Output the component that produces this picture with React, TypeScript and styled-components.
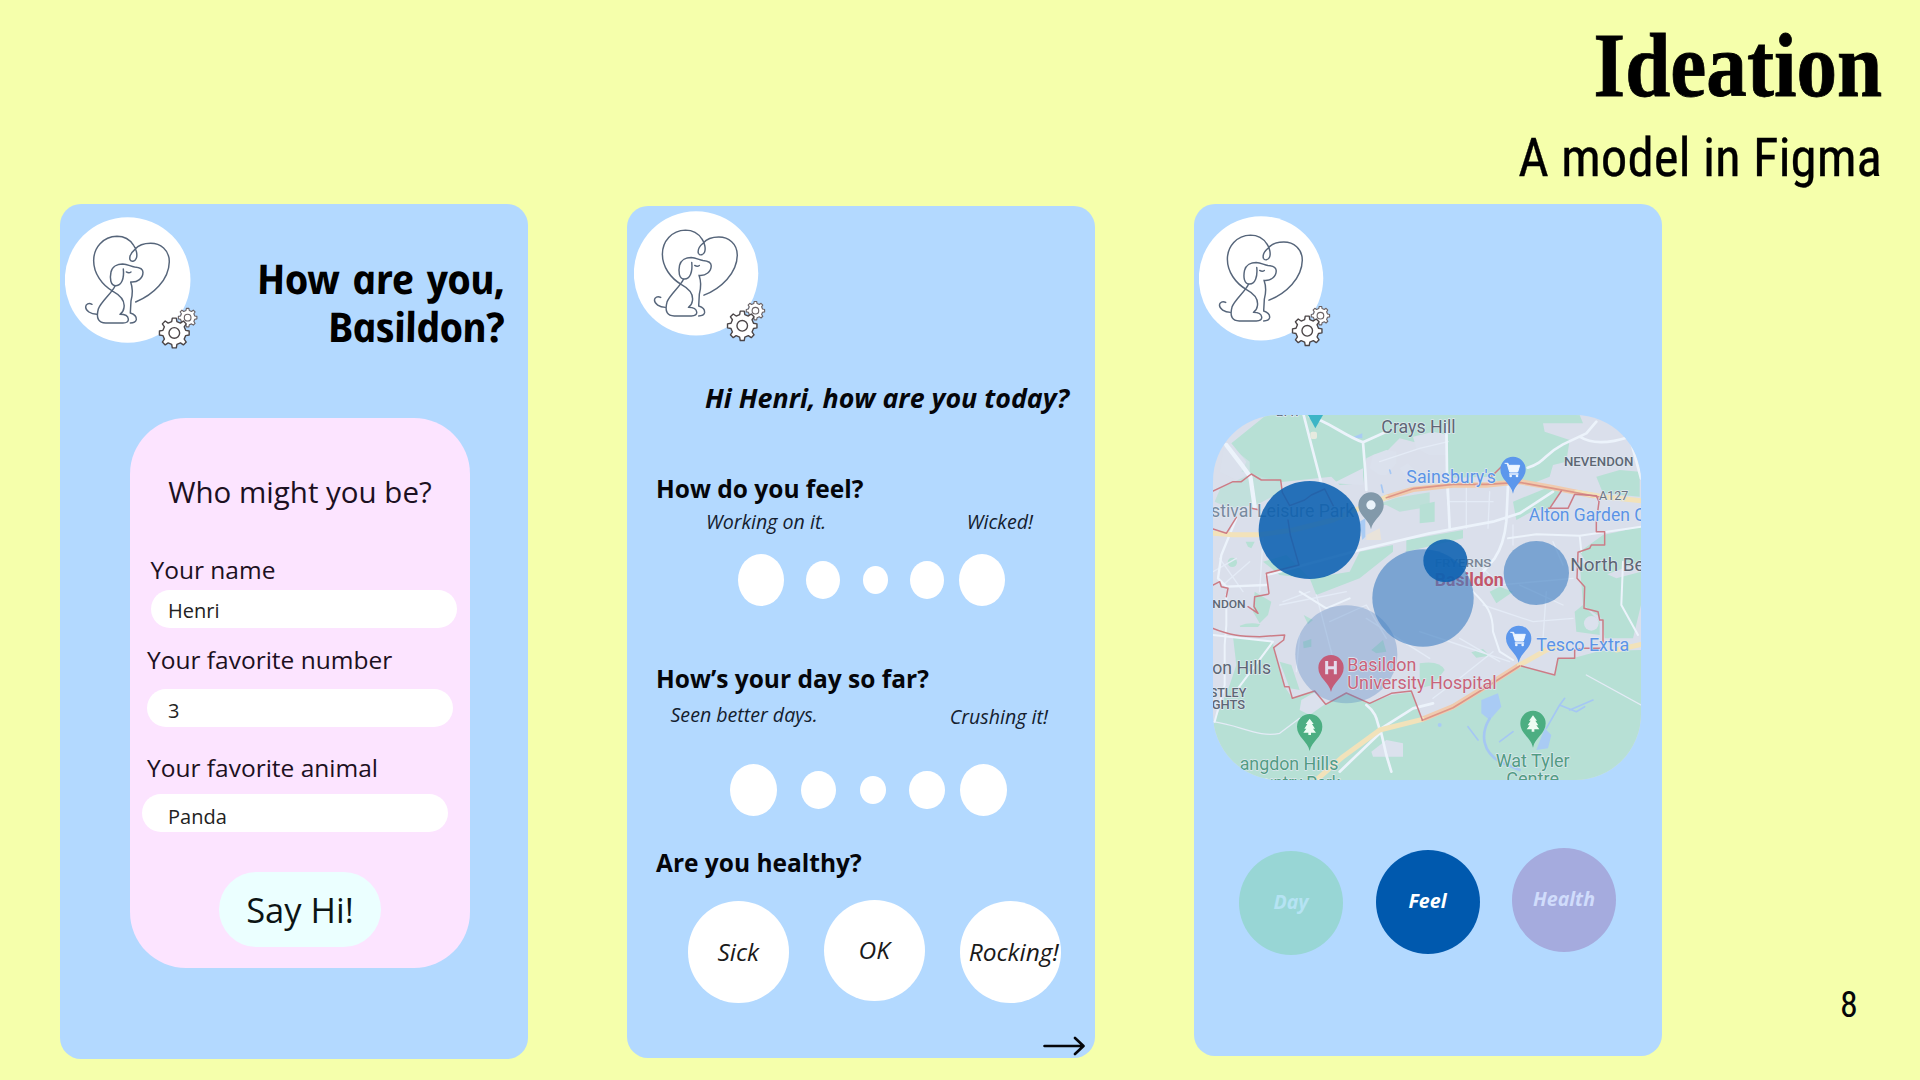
import React from "react";
import styled, { createGlobalStyle } from "styled-components";

const Global = createGlobalStyle`
  *, *::before, *::after { box-sizing: border-box; }
  body { margin: 0; background: #f5ffab; }
  h1, h2, p { margin: 0; }
`;

const sans = `"Open Sans", "Noto Sans", sans-serif`;
const condensed = `"Roboto Condensed", Roboto, sans-serif`;

const Slide = styled.main`
  width: 1920px;
  height: 1080px;
  overflow: hidden;
  display: flex;
  flex-direction: column;
  background: #f5ffab;
  color: #05060a;
  font-family: ${sans};
`;

const SlideHeader = styled.header`
  height: 204px;
  flex: none;
  padding: 12px 38px 0 0;
  display: flex;
  flex-direction: column;
  align-items: flex-end;
  color: #000;
`;

const Title = styled.h1`
  font: 700 92px/106px "Liberation Serif", serif;
  white-space: nowrap;
  transform: scaleX(0.882);
  transform-origin: right center;
  -webkit-text-stroke: 0.8px #000;
`;

const Subtitle = styled.p`
  margin-top: 9px;
  font: 400 53px/62px ${condensed};
  font-stretch: 75%;
  white-space: nowrap;
  -webkit-text-stroke: 0.3px #000;
`;

const Stage = styled.div`
  flex: 1;
  display: flex;
  align-items: flex-start;
  gap: 99px;
  padding-left: 60px;
`;

const Phone = styled.section<{ $drop?: number; $height: number }>`
  flex: none;
  width: 468px;
  height: ${(p) => p.$height}px;
  margin-top: ${(p) => p.$drop ?? 0}px;
  border-radius: 21px;
  background: #b3d9ff;
  display: flex;
  flex-direction: column;
`;

const PageNumber = styled.p`
  margin: 779px 0 0 79px;
  font: 400 36px/44px ${condensed};
  font-stretch: 75%;
`;

const LogoArt = styled.svg<{ $size: number; $top: number; $left: number }>`
  flex: none;
  display: block;
  width: ${(p) => p.$size}px;
  height: ${(p) => p.$size}px;
  margin: ${(p) => p.$top}px 0 0 ${(p) => p.$left}px;
`;

/* ---------- welcome screen ---------- */

const WelcomeHead = styled.div`
  height: 214px;
  display: flex;
  justify-content: space-between;
`;

const Greeting = styled.h2`
  margin: 50px 25px 0 0;
  display: flex;
  flex-direction: column;
  align-items: flex-end;
  font: italic 700 41px/48px ${sans};
  letter-spacing: -1.1px;
  word-spacing: 4px;
  white-space: nowrap;
  color: #000;
`;

const GreetingLine = styled.span`
  transform: skewX(11deg);
`;

const FormCard = styled.div`
  width: 340px;
  height: 550px;
  margin-left: 70px;
  padding-top: 54px;
  border-radius: 56px;
  background: #fce4ff;
  display: flex;
  flex-direction: column;
  color: #1c1022;
`;

const FormTitle = styled.h2`
  font-size: 29.500px;
  font-weight: 400;
  line-height: 40px;
  text-align: center;
  margin-bottom: 42.5px;
`;

const Label = styled.label<{ $left: number; $top?: number }>`
  margin: ${(p) => p.$top ?? 0}px 0 0 ${(p) => p.$left}px;
  font-size: 24.5px;
  line-height: 30px;
  white-space: nowrap;
`;

const Field = styled.div<{ $left: number; $top: number; $inset: number; $rise: number }>`
  width: 306px;
  height: 38px;
  flex: none;
  margin: ${(p) => p.$top}px 0 0 ${(p) => p.$left}px;
  padding: ${(p) => p.$rise}px 0 0 ${(p) => p.$inset}px;
  border-radius: 19px;
  background: #fff;
  font-size: 20px;
  line-height: 30px;
  color: #222;
`;

const HiButton = styled.button`
  align-self: center;
  margin-top: 40px;
  width: 162px;
  height: 75px;
  flex: none;
  border: 0;
  border-radius: 38px;
  background: #ebffff;
  font: 400 34.5px/48px ${sans};
  color: #0c1414;
  padding: 1px 0 0;
`;

/* ---------- survey screen ---------- */

const Hello = styled.h2`
  margin: 34.5px 26px 56px 0;
  font: italic 700 26.8px/40px ${sans};
  text-align: right;
  white-space: nowrap;
`;

const Question = styled.h2<{ $top?: number }>`
  margin: ${(p) => p.$top ?? 0}px 0 0 29px;
  font: 700 24.5px/30px ${sans};
  white-space: nowrap;
`;

const Hints = styled.div<{ $top: number; $left: number; $right: number }>`
  margin-top: ${(p) => p.$top}px;
  padding: 0 ${(p) => p.$right}px 0 ${(p) => p.$left}px;
  height: 30px;
  display: flex;
  justify-content: space-between;
  font: italic 400 19.6px/30px ${sans};
  color: #14202e;
`;

const HintEnd = styled.span<{ $drop?: number }>`
  padding-top: ${(p) => p.$drop ?? 0}px;
`;

const Dots = styled.div<{ $top: number; $left: number; $gap: number }>`
  height: 52px;
  margin: ${(p) => p.$top}px 0 0 ${(p) => p.$left}px;
  display: flex;
  align-items: center;
  gap: ${(p) => p.$gap}px;
`;

const Dot = styled.span<{ $w: number; $h: number }>`
  width: ${(p) => p.$w}px;
  height: ${(p) => p.$h}px;
  border-radius: 50%;
  background: #fff;
  &:last-child { margin-left: -8.500px; }
`;

const Choices = styled.div`
  margin: 21.5px 0 0 60.5px;
  display: flex;
  gap: 34.5px;
`;

const Choice = styled.div<{ $drop?: number; $nudge?: number }>`
  width: 101.5px;
  height: 101.5px;
  margin-top: ${(p) => p.$drop ?? 0}px;
  padding-left: ${(p) => p.$nudge ?? 0}px;
  border-radius: 50%;
  background: #fff;
  display: flex;
  align-items: center;
  justify-content: center;
  font: italic 400 24.5px/30px ${sans};
  white-space: nowrap;
  color: #1a1a1a;
`;

const NextArrow = styled.svg`
  display: block;
  align-self: flex-end;
  margin: 33px 10px 0 0;
  width: 42px;
  height: 20px;
`;

/* ---------- map screen ---------- */

const MapFrame = styled.svg`
  display: block;
  flex: none;
  width: 428px;
  height: 365px;
  margin: 67px 0 0 19px;
  border-radius: 66px;
  background: #dadfeb;
  font-family: Roboto, sans-serif;
`;

const Filters = styled.div`
  margin: 68px 0 0 45px;
  display: flex;
  gap: 32.5px;
`;

const Filter = styled.div<{ $bg: string; $ink: string; $drop: number }>`
  width: 104px;
  height: 104px;
  margin-top: ${(p) => p.$drop}px;
  border-radius: 50%;
  background: ${(p) => p.$bg};
  color: ${(p) => p.$ink};
  display: flex;
  align-items: center;
  justify-content: center;
  font: italic 700 19.6px/28px ${sans};
  padding-bottom: 2px;
`;

function gearPath(cx: number, cy: number, outer: number, root: number, teeth = 8) {
  const step = (Math.PI * 2) / teeth;
  const pts: string[] = [];
  const at = (r: number, a: number) => `${(cx + r * Math.cos(a)).toFixed(1)} ${(cy + r * Math.sin(a)).toFixed(1)}`;
  for (let i = 0; i < teeth; i++) {
    const a = i * step - Math.PI / 2;
    pts.push(at(root, a - step * 0.29), at(outer, a - step * 0.17), at(outer, a + step * 0.17), at(root, a + step * 0.29));
  }
  return `M${pts.join("L")}Z`;
}

function Logo({ size, top, left }: { size: number; top: number; left: number }) {
  return (
    <LogoArt $size={size} $top={top} $left={left} viewBox="46 66 400 400" fill="none" strokeLinecap="round" strokeLinejoin="round">
      <circle cx="234" cy="255" r="188.500" fill="#fff" />
      <g stroke="#56657a" strokeWidth="4.400">
        <path d="M258 321C310 300 358 255 359 200C359 164 332 145 303 145C285 145 266 151 256 163C244 173 238 182 241 194C245 202 256 200 260 190C264 180 260 162 252 151C241 134 222 124 202 124C160 125 132 158 132 197C132 235 157 270 190 289C214 302 226 320 223 338C222 348 218 353 211 358C225 358 235 362 236 372C237 380 231 384 220 384H168C148 384 138 372 146 342C154 320 187 294 196 273" />
        <path d="M141 358C123 358 108 347 108 336C108 327 118 323 127 328" />
        <path d="M221 222C224 250 216 272 199 272C182 272 180 250 184 231C188 214 204 207 219 207C235 208 242 214 255 216C268 217 280 221 280 232C280 250 264 263 243 261C252 285 248 303 244 318L242 354C255 358 261 366 260 374C258 382 251 384 242 384" />
        <path d="M230 231Q238 236 244 231" />
      </g>
      <g stroke="#6a6265" strokeWidth="3.400" fill="#fff">
        <path d={gearPath(414, 368, 28, 22)} />
        <circle cx="414" cy="368" r="10" />
      </g>
      <g stroke="#4b4547" strokeWidth="4.200" fill="#fff">
        <path d={gearPath(374, 414, 45, 35)} />
        <circle cx="374" cy="414" r="16" />
      </g>
    </LogoArt>
  );
}

function Pin({ x, y, color, children }: { x: number; y: number; color: string; children?: React.ReactNode }) {
  return (
    <g transform={`translate(${x} ${y})`}>
      <path d="M0 73C-6 42 -38 32 -38 0A38 38 0 0 1 38 0C38 32 6 42 0 73Z" fill={color} />
      {children}
    </g>
  );
}

const Cart = () => (
  <g>
    <path d="M-24 -18H-15L-13 -12H20L14 8H-10L-17 -15" fill="#eef6ff" stroke="#eef6ff" strokeWidth="3" />
    <path d="M-10 14H15" stroke="#eef6ff" strokeWidth="4" />
    <circle cx="-7" cy="20" r="4" fill="#eef6ff" />
    <circle cx="12" cy="20" r="4" fill="#eef6ff" />
  </g>
);

const Tree = () => (
  <path d="M0 -24L12 -8H7L16 6H10L19 18H4V25H-4V18H-19L-10 6H-16L-7 -8H-12Z" fill="#eefcf4" />
);

interface Place {
  text: string;
  x: number;
  y: number;
  w: number;
  size: number;
  color: string;
  weight?: number;
}

const slate = "#5d6674";
const blue = "#5b93e6";
const red = "#c9637a";
const green = "#529c83";

const places: Place[] = [
  { text: "BAY", x: 228, y: 34, w: 76, size: 32, color: slate },
  { text: "Crays Hill", x: 545, y: 83, w: 223, size: 54, color: slate },
  { text: "Sainsbury's", x: 620, y: 234, w: 269, size: 54, color: blue },
  { text: "NEVENDON", x: 1093, y: 184, w: 208, size: 36, color: slate, weight: 500 },
  { text: "A127", x: 1198, y: 285, w: 88, size: 40, color: "#6d7580" },
  { text: "Alton Garden Centre", x: 987, y: 349, w: 470, size: 54, color: blue },
  { text: "stival Leisure Park", x: 34, y: 336, w: 430, size: 54, color: "#78899e" },
  { text: "FRYERNS", x: 705, y: 487, w: 170, size: 35, color: "#7b8595", weight: 500 },
  { text: "Basildon", x: 705, y: 544, w: 207, size: 53, color: "#c2566b", weight: 700 },
  { text: "North Benfleet", x: 1112, y: 497, w: 365, size: 55, color: slate },
  { text: "NDON", x: 38, y: 608, w: 100, size: 35, color: slate, weight: 500 },
  { text: "Tesco Extra", x: 1010, y: 738, w: 279, size: 54, color: blue },
  { text: "Basildon", x: 443, y: 798, w: 207, size: 54, color: red },
  { text: "University Hospital", x: 443, y: 851, w: 448, size: 54, color: red },
  { text: "on Hills", x: 38, y: 807, w: 176, size: 54, color: slate },
  { text: "STLEY", x: 30, y: 877, w: 110, size: 36, color: slate, weight: 500 },
  { text: "GHTS", x: 36, y: 912, w: 100, size: 36, color: slate, weight: 500 },
  { text: "angdon Hills", x: 120, y: 1096, w: 296, size: 54, color: green },
  { text: "Country Park", x: 132, y: 1151, w: 290, size: 54, color: green },
  { text: "Wat Tyler", x: 888, y: 1086, w: 222, size: 54, color: green },
  { text: "Centre", x: 920, y: 1141, w: 158, size: 54, color: green },
];

function TownMap() {
  return (
    <MapFrame viewBox="40 30 1284 1095" preserveAspectRatio="none" fill="none" strokeLinecap="round" strokeLinejoin="round">
      <g fill="#b7e0d5">
        <path d="M95 115L200 30H1140L1150 55L1030 55L1035 80L1110 105L1100 170L1060 180L1050 215L1000 235L900 232L870 215L760 218L742 200V105L690 120L640 110L600 100L560 140L520 150L500 160L490 235L420 240L395 215L240 232L155 206L125 200L140 170Z" />
        <path d="M62 250L155 206L243 225V262L170 300L90 310L45 290Z" opacity=".7" />
        <path d="M530 300L590 278L690 262V305L600 320L560 300Z" opacity=".8" />
        <path d="M940 290L1050 245L1085 255L1050 310L1000 318L950 345Z" />
        <path d="M1190 215L1260 195L1320 200V275L1210 265Z" />
        <path d="M480 440L580 420V440L480 520L350 570L330 520L450 500Z" />
        <path d="M620 405L790 375V400L620 440Z" />
        <path d="M660 300L705 290V350L660 355Z" />
        <path d="M190 470L260 450L330 520L240 510Z" />
        <circle cx="98" cy="472" r="14" />
        <path d="M138 410H165L155 430L145 425Z" />
        <path d="M1210 390L1324 365V470L1190 520L1140 440Z" />
        <path d="M1140 470L1250 520L1324 500V600L1300 700L1215 700L1205 640L1150 600Z" />
        <path d="M1125 620L1150 600L1200 650V690L1130 680Z" />
        <path d="M165 560L215 590L205 630L180 655L160 620Z" />
        <path d="M120 662Q150 650 182 658L175 666H122Z" />
        <path d="M240 770L275 780L300 855L270 850Z" />
        <path d="M870 560L900 545L940 560L890 595Z" />
        <path d="M815 742L850 732L870 752L830 758Z" />
        <path d="M660 775Q720 765 735 795L700 840L660 850Z" />
        <path d="M310 710L335 702V725L312 730ZM515 735L550 705L560 740L530 745ZM312 630L340 645L325 658Z" />
        <path d="M100 695L220 712L222 730L255 845L278 880L345 858L378 898L440 866L510 895L575 870L635 862L668 945L850 850L962 782L1065 812L1075 762L1130 757L1200 738L1324 735V1125H40V960L90 840L110 780Z" />
      </g>
      <g fill="#dbe1ed">
        <path d="M520 150L560 135L590 140V175L560 210H540L510 190Z" />
        <path d="M600 190L625 175L650 200L620 215Z" />
        <path d="M400 235L490 190V240Z" />
        <path d="M640 95L700 80L745 90V150L690 150L650 130Z" />
        <path d="M75 110L150 170L150 205L110 225L60 200Z" opacity=".6" />
        <path d="M515 1040L560 1005L610 1015V1055L520 1055Z" />
        <path d="M305 885L345 862L380 895L330 930L300 915Z" />
        <circle cx="1175" cy="655" r="22" />
      </g>
      <g fill="#a9cbf4">
        <path d="M845 885L895 865L905 905L870 945L845 925Z" />
        <path d="M1010 1035L1035 970L1055 990L1045 1030Z" />
        <path d="M455 98L488 85V100Z" />
        <path d="M480 350L497 340V395L488 405Z" />
        <circle cx="720" cy="960" r="6" />
      </g>
      <g stroke="#a5c7f3" strokeWidth="8">
        <path d="M870 940C840 990 850 1040 900 1070L960 1095" />
        <path d="M1040 970L1080 900L1130 920L1155 905M1080 900L1095 880M805 965L835 1005M900 1010L940 980M1110 915L1180 885" strokeWidth="5" />
        <path d="M545 240L550 262M570 195L573 205" strokeWidth="5" />
      </g>
      <g stroke="#e4ebf6" strokeWidth="4">
        <path d="M40 500L110 460M60 460L130 560M190 400L180 560M70 540L150 470M750 290H880M800 240V370M870 260L865 370M740 230L745 300M240 600L440 560M350 570L400 760M390 650L500 600L560 700M840 480L900 540L1120 520M960 540L1090 600M850 600L1000 650L1120 640M780 700L900 770M660 680L780 720L930 770M700 880L780 820L880 740M940 360V420M1040 560L1030 700M500 640L690 760M250 590L330 560M300 690L290 800M1060 410L1090 480" />
        <path d="M40 950C120 960 180 1000 240 985L300 940M1160 810L1324 900M540 170L660 130L745 110" />
      </g>
      <g stroke="#ecf3fb" strokeWidth="8">
        <path d="M80 120L130 185L152 215L165 305" strokeWidth="13" />
        <path d="M312 30L335 120L365 235M330 35C380 45 430 90 490 112L560 80M490 112L497 200L500 255" />
        <path d="M984 188C1040 170 1030 150 1090 118L1160 85L1190 50M1140 95C1180 120 1230 115 1290 95M1290 95L1324 220" />
        <path d="M200 510L480 435L690 385L880 350L960 325L1060 260M740 60L742 200L750 370M925 240L920 350C915 400 905 430 885 460L850 500" />
        <path d="M925 400L1010 388L1140 392L1324 365M1140 392L1145 440" strokeWidth="6" />
        <path d="M110 340L65 450L55 520L80 545L200 540" strokeWidth="7" />
        <path d="M80 570V660L75 720V840L45 950M40 690L220 710L115 850M300 560L380 610L450 580M820 560C860 600 880 620 880 680L900 740L940 765" strokeWidth="6" />
        <path d="M500 900C540 930 530 960 545 985L560 1050L575 1100M545 970L640 910L700 895M545 980L420 1100" />
        <path d="M1270 470L1265 600L1315 690" strokeWidth="6" />
      </g>
      <g strokeWidth="16" stroke="#f0cbae">
        <path d="M560 277L640 253L760 240H860L960 230L1060 248L1180 272M668 943L760 905L850 850L960 780" />
      </g>
      <g strokeWidth="15" stroke="#f2e2ba">
        <path d="M40 385L100 389L180 389L280 375L400 345L480 310L560 277M1130 262L1210 275L1324 287M350 1125L430 1055L540 975L668 943M960 780L1040 735L1090 725M1250 735L1324 718" />
      </g>
      <path d="M560 278L640 251L760 238H860L960 232L1060 250L1200 276M668 946L760 908L850 853L960 783" stroke="#dd9588" strokeWidth="5" />
      <g stroke="#cc7c86" strokeWidth="4.500">
        <path d="M40 258L100 230L125 230L155 207L185 225H243L248 262L270 302L315 285L335 270L375 252L402 305M40 372L80 385L110 337M155 310L180 315M265 345L272 390L298 480L200 505L208 565L205 568L165 575L163 605L175 625L145 605M40 540L60 530L65 545L85 550L80 575" />
        <path d="M40 670C90 690 120 695 180 695L255 690L252 705L222 728L255 845H268L278 880L345 858L378 898L440 864L510 895L575 865L635 858L668 945" />
        <path d="M870 220L905 185H920M1050 310L1085 258M1045 310L1105 310L1125 268L1190 272L1198 290L1190 350V380H1215V420H1175L1170 430L1135 442L1132 520L1155 545L1153 610L1195 620L1200 645H1210V730L1150 730L1125 735V760H1075L1065 810L965 783" />
      </g>
      <path d="M325 30H370L347 70Z" fill="#3db5c6" />
      <path d="M500 390L540 370L545 405L500 405Z" fill="#e9e3da" />
      <rect x="332" y="80" width="20" height="22" rx="6" fill="#e6eadf" />
      <ellipse cx="440" cy="748" rx="153" ry="147" fill="#4e80c2" opacity=".32" />
      <g stroke="#e0e9f1" strokeWidth="4" paintOrder="stroke">
        {places.map((p, i) => (
          <text key={i} x={p.x} y={p.y} fontSize={p.size} fill={p.color} fontWeight={p.weight ?? 400} textLength={p.w} lengthAdjust="spacingAndGlyphs">
            {p.text}
          </text>
        ))}
      </g>
      <Pin x={514} y={300} color="#8299aa">
        <circle r="14" fill="#eaf3fb" />
      </Pin>
      <Pin x={940} y={193} color="#5c97ec"><Cart /></Pin>
      <Pin x={957} y={700} color="#5c97ec"><Cart /></Pin>
      <Pin x={394} y={788} color="#c45c78">
        <path d="M-13 -20V20M13 -20V20M-13 0H13" stroke="#e4dcec" strokeWidth="9" strokeLinecap="butt" />
      </Pin>
      <Pin x={330} y={965} color="#4cae82"><Tree /></Pin>
      <Pin x={1000} y={955} color="#4cae82"><Tree /></Pin>
      <ellipse cx="670" cy="579" rx="152" ry="146" fill="#3c7dc1" opacity=".6" />
      <ellipse cx="1010" cy="504" rx="98" ry="96" fill="#3c7dc1" opacity=".6" />
      <ellipse cx="330" cy="375" rx="153" ry="147" fill="#0a5fb0" opacity=".87" />
      <ellipse cx="737" cy="467" rx="66" ry="64" fill="#0a5fb0" opacity=".87" />
    </MapFrame>
  );
}

function Scale({ top, left, gap, stretch = 0 }: { top: number; left: number; gap: number; stretch?: number }) {
  const dots = [[46, 52], [34, 38], [25, 28], [34, 38], [46, 52]];
  return (
    <Dots $top={top} $left={left} $gap={gap}>
      {dots.map(([w, h], i) => (
        <Dot key={i} $w={w + stretch} $h={h} />
      ))}
    </Dots>
  );
}

export default function App() {
  return (
    <Slide>
      <Global />
      <SlideHeader>
        <Title>Ideation</Title>
        <Subtitle>A model in Figma</Subtitle>
      </SlideHeader>
      <Stage>
        <Phone $height={855}>
          <WelcomeHead>
            <Logo size={133.3} top={13} left={5} />
            <Greeting>
              <GreetingLine>How are you,</GreetingLine>
              <GreetingLine>Basildon?</GreetingLine>
            </Greeting>
          </WelcomeHead>
          <FormCard>
            <FormTitle>Who might you be?</FormTitle>
            <Label $left={20.5}>Your name</Label>
            <Field $left={20.5} $top={5.5} $inset={17.5} $rise={5.5}>Henri</Field>
            <Label $left={17} $top={16.5}>Your favorite number</Label>
            <Field $left={17} $top={14.5} $inset={21} $rise={7}>3</Field>
            <Label $left={17} $top={25.5}>Your favorite animal</Label>
            <Field $left={12} $top={11.5} $inset={26} $rise={8}>Panda</Field>
            <HiButton>Say Hi!</HiButton>
          </FormCard>
        </Phone>

        <Phone $height={852} $drop={2}>
          <Logo size={132} top={5} left={7} />
          <Hello>Hi Henri, how are you today?</Hello>
          <Question>How do you feel?</Question>
          <Hints $top={3.7} $left={79} $right={62}>
            <span>Working on it.</span>
            <HintEnd>Wicked!</HintEnd>
          </Hints>
          <Scale top={16.8} left={110.7} gap={22.6} />
          <Question $top={58.5}>How’s your day so far?</Question>
          <Hints $top={5.7} $left={43.5} $right={47}>
            <span>Seen better days.</span>
            <HintEnd $drop={1.5}>Crushing it!</HintEnd>
          </Hints>
          <Scale top={33.8} left={103} gap={23.6} stretch={1.2} />
          <Question $top={32.2}>Are you healthy?</Question>
          <Choices>
            <Choice $drop={1.5}>Sick</Choice>
            <Choice>OK</Choice>
            <Choice $drop={1.5} $nudge={7}>Rocking!</Choice>
          </Choices>
          <NextArrow viewBox="0 0 42 20" fill="none" stroke="#05060a" strokeWidth="2.600" strokeLinecap="round" strokeLinejoin="round">
            <path d="M1.500 10H40M32 2L40.500 10L32 18" />
          </NextArrow>
        </Phone>

        <Phone $height={852}>
          <Logo size={132} top={12} left={5} />
          <TownMap />
          <Filters>
            <Filter $bg="#98d6d5" $ink="#b5e3f3" $drop={3}>Day</Filter>
            <Filter $bg="#0059ae" $ink="#fff" $drop={2}>Feel</Filter>
            <Filter $bg="#a5abde" $ink="#d0dcfb" $drop={0}>Health</Filter>
          </Filters>
        </Phone>
        <PageNumber>8</PageNumber>
      </Stage>
    </Slide>
  );
}
